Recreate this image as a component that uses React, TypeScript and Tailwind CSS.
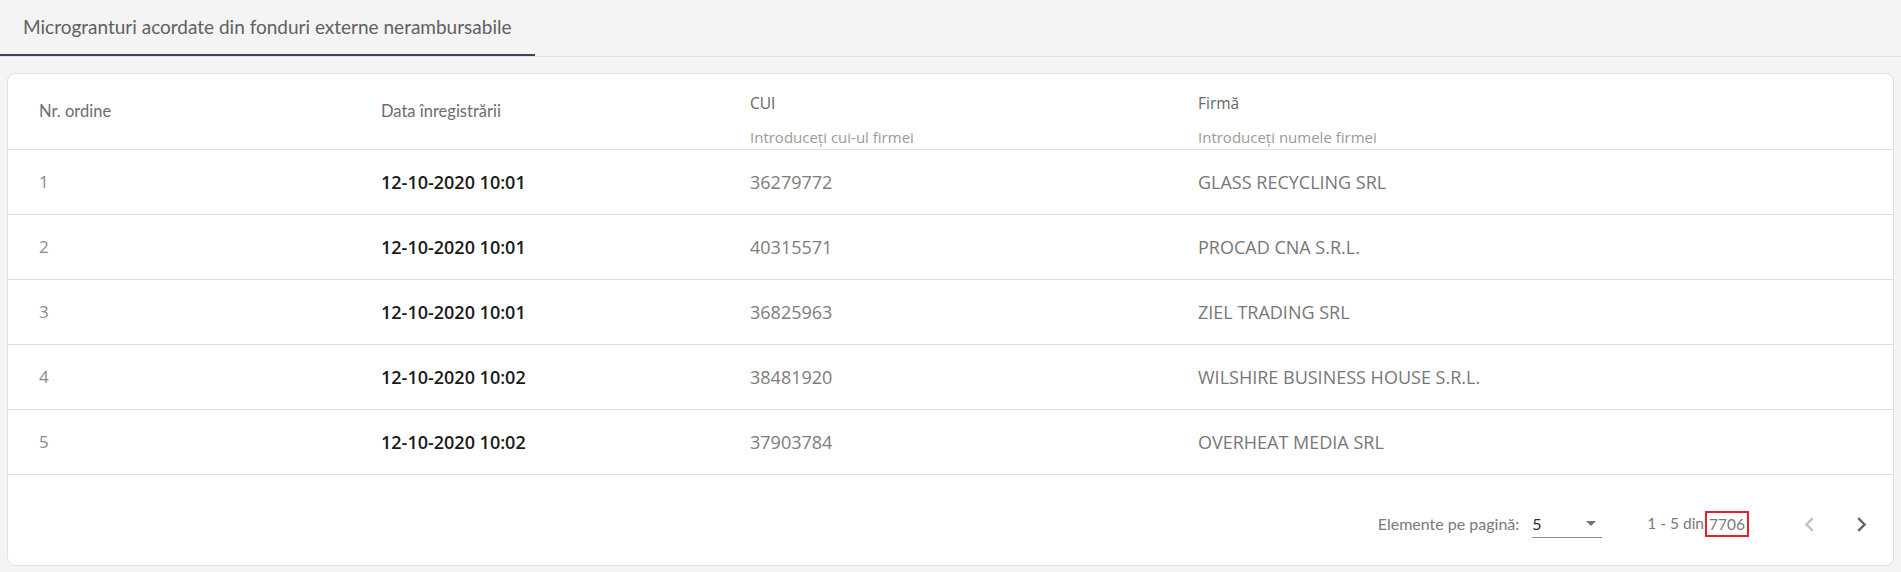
import React from 'react';

interface Row {
  nr: number;
  data: string;
  cui: string;
  firma: string;
}

const ROWS: Row[] = [
  { nr: 1, data: '12-10-2020 10:01', cui: '36279772', firma: 'GLASS RECYCLING SRL' },
  { nr: 2, data: '12-10-2020 10:01', cui: '40315571', firma: 'PROCAD CNA S.R.L.' },
  { nr: 3, data: '12-10-2020 10:01', cui: '36825963', firma: 'ZIEL TRADING SRL' },
  { nr: 4, data: '12-10-2020 10:02', cui: '38481920', firma: 'WILSHIRE BUSINESS HOUSE S.R.L.' },
  { nr: 5, data: '12-10-2020 10:02', cui: '37903784', firma: 'OVERHEAT MEDIA SRL' },
];

const LATO = "font-['Lato',sans-serif]";
const SEGOE = "font-['Open_Sans','Noto_Sans',sans-serif]";

// grid used by header and rows, so the columns stay aligned
const COLS = 'grid grid-cols-[342px_369px_448px_1fr] pl-[31px]';

const Chevron = ({ dir, color }: { dir: 'left' | 'right'; color: string }) => (
  <svg width="29" height="29" viewBox="0 0 24 24" fill={color}>
    {dir === 'left' ? (
      <path d="M15.41 7.41 14 6l-6 6 6 6 1.41-1.41L10.83 12z" />
    ) : (
      <path d="M8.59 16.59 10 18l6-6-6-6-1.41 1.41L13.17 12z" />
    )}
  </svg>
);

export default function App() {
  return (
    <div className="min-h-screen bg-[#f4f4f4] pb-[8px]">

      {/* Tabs */}
      <div className="h-[57px] border-b border-[#e0e0e0] flex">
        <div className={`w-[535px] h-full border-b-2 border-[#3d4257] flex items-center pl-[23px] text-[19px] text-[#606060] ${LATO}`}>
          Microgranturi acordate din fonduri externe nerambursabile
        </div>
      </div>

      {/* Card */}
      <div className="mt-[16px] mx-[7px] bg-white border border-[#e0e0e0] rounded-[8px] overflow-hidden">

        {/* Header */}
        <div className={`${COLS} h-[76px] border-b border-[#e0e0e0]`}>
          <div className={`flex items-center text-[16.5px] text-[#6d6d6d] ${LATO}`}>Nr. ordine</div>
          <div className={`flex items-center text-[16.5px] text-[#6d6d6d] ${LATO}`}>Data înregistrării</div>
          <div className={`flex flex-col pt-[19px] ${SEGOE}`}>
            <span className="leading-[20px] text-[15.5px] text-[#666]">CUI</span>
            <span className="mt-[14px] leading-[20px] text-[15px] text-[#9a9a9a]">Introduceți cui-ul firmei</span>
          </div>
          <div className={`flex flex-col pt-[19px] ${SEGOE}`}>
            <span className="leading-[20px] text-[15.5px] text-[#666]">Firmă</span>
            <span className="mt-[14px] leading-[20px] text-[15px] text-[#9a9a9a]">Introduceți numele firmei</span>
          </div>
        </div>

        {/* Rows */}
        {ROWS.map(r => (
          <div key={r.nr} className={`${COLS} h-[65px] border-b border-[#e0e0e0] items-center ${SEGOE}`}>
            <span className="text-[17px] text-[#8a8a8a]">{r.nr}</span>
            <span className="text-[18px] font-semibold text-[#1a1a1a]">{r.data}</span>
            <span className="text-[18px] text-[#7d7d7d]">{r.cui}</span>
            <span className="text-[18px] text-[#777]">{r.firma}</span>
          </div>
        ))}

        {/* Paginator */}
        <div className={`h-[90px] pt-[8px] pr-[8px] flex items-center justify-end text-[16px] ${LATO}`}>
          <span className="text-[#7a7a7a]">Elemente pe pagină:</span>
          <div className="ml-[13px] w-[70px] h-[28px] border-b border-[#8a8a8a] flex items-center justify-between pr-[6px]">
            <span className="text-[#2a2a2a]">5</span>
            <span className="w-0 h-0 border-l-[5.5px] border-r-[5.5px] border-t-[5.5px] border-l-transparent border-r-transparent border-t-[#757575]" />
          </div>
          <span className="ml-[45px] text-[15.5px] text-[#7a7a7a] flex items-center">
            1 - 5 din
            <span className="ml-[1px] border-2 border-[#e8202a] px-[2px] py-[1px] leading-[20px]">7706</span>
          </span>
          <button className="ml-[36px] w-[48px] h-[48px] flex items-center justify-center">
            <Chevron dir="left" color="#c4c4c4" />
          </button>
          <button className="ml-[4px] w-[48px] h-[48px] flex items-center justify-center">
            <Chevron dir="right" color="#666" />
          </button>
        </div>
      </div>
    </div>
  );
}
